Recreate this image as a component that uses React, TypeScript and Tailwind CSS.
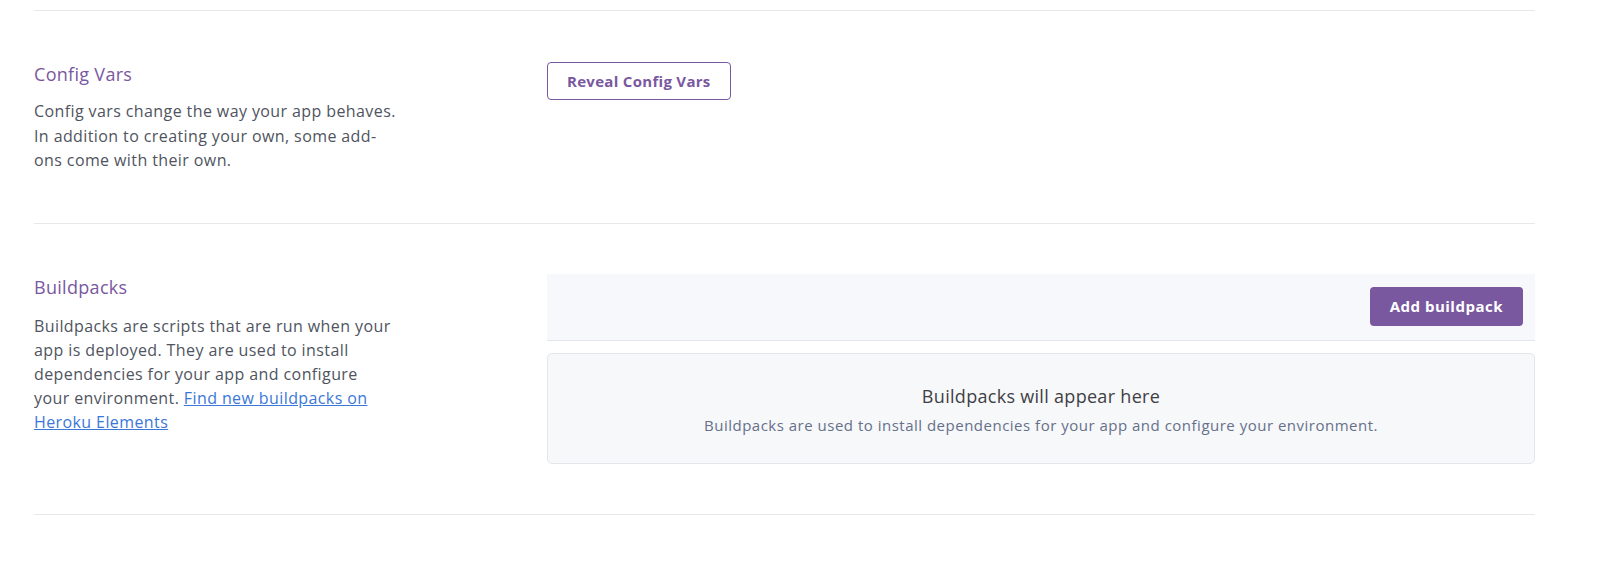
import React from 'react';

const font = { fontFamily: '"Open Sans", "Liberation Sans", sans-serif' };

const App: React.FC = () => {
  return (
    <div className="min-h-screen bg-white pt-[10px] pl-[34px]" style={font}>
      <div className="w-[1501px] border-t border-[#e8e8eb]">
        {/* Config Vars */}
        <section className="flex pt-[51px] pb-[50px] border-b border-[#e8e8eb]">
          <div className="w-[513px] shrink-0">
            <h3 className="text-[18px] leading-6 tracking-[0.3px] text-[#79589f] mb-[13px]">Config Vars</h3>
            <p className="max-w-[366px] text-[16px] leading-[24.5px] tracking-[0.4px] text-[#4f5460]">
              Config vars change the way your app behaves. In addition to creating your own, some add-ons come with their own.
            </p>
          </div>
          <div className="flex-1">
            <button className="h-[38px] px-[19px] rounded border border-[#79589f] bg-white text-[15px] font-bold tracking-[0.3px] text-[#79589f]">
              Reveal Config Vars
            </button>
          </div>
        </section>

        {/* Buildpacks */}
        <section className="flex pt-[50px] pb-[50px] border-b border-[#e8e8eb]">
          <div className="w-[513px] shrink-0 pt-px">
            <h3 className="text-[18px] leading-6 tracking-[0.3px] text-[#79589f] mb-[15px]">Buildpacks</h3>
            <p className="max-w-[360px] text-[16px] leading-[24px] tracking-[0.4px] text-[#4f5460]">
              Buildpacks are scripts that are run when your app is deployed. They are used to install dependencies for your app and configure your environment.{' '}
              <a href="#" className="text-[#3b77d8] underline">
                Find new buildpacks on Heroku Elements
              </a>
            </p>
          </div>
          <div className="flex-1">
            <div className="h-[67px] flex items-center justify-end pr-3 bg-[#f7f8fb] border-b border-[#e3e6ec]">
              <button className="h-[39px] px-[20px] rounded bg-[#79589f] text-[15px] font-bold tracking-[0.5px] text-white">
                Add buildpack
              </button>
            </div>
            <div className="mt-3 flex flex-col items-center pt-[30px] pb-[28px] rounded-[5px] border border-[#e3e6ea] bg-[#f7f8fa]">
              <p className="text-[18px] leading-6 tracking-[0.3px] text-[#3f3f44]">Buildpacks will appear here</p>
              <p className="mt-[7px] text-[15px] leading-5 tracking-[0.5px] text-[#66708a]">
                Buildpacks are used to install dependencies for your app and configure your environment.
              </p>
            </div>
          </div>
        </section>
      </div>
    </div>
  );
};

export default App;
